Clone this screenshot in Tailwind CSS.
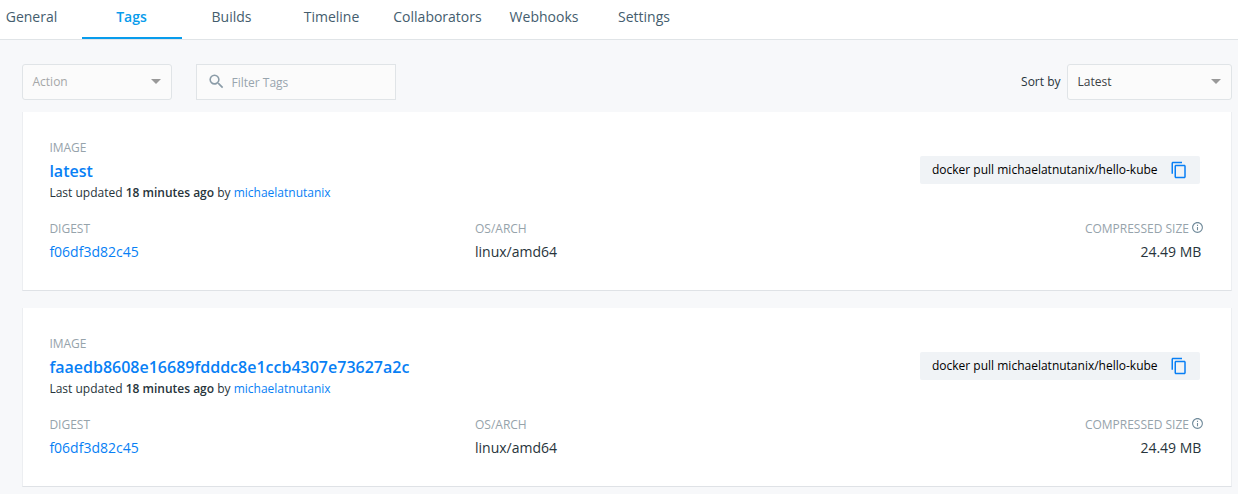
<!DOCTYPE html>
<html lang="en">
<head>
<meta charset="utf-8">
<title>Tags</title>
<script src="https://cdn.jsdelivr.net/npm/@tailwindcss/browser@4"></script>
</head>
<body class="h-[494px] overflow-hidden bg-[#f7f8fa] font-['Open_Sans',sans-serif] text-xs text-[#27343b]">
<svg class="hidden">
  <symbol id="copy" viewBox="0 0 24 24"><path fill="currentColor" d="M16 1H4c-1.100 0-2 .9-2 2v14h2V3h12V1zm3 4H8c-1.100 0-2 .9-2 2v14c0 1.100.9 2 2 2h11c1.100 0 2-.9 2-2V7c0-1.100-.9-2-2-2zm0 16H8V7h11v14z"/></symbol>
  <symbol id="info" viewBox="0 0 24 24"><path fill="currentColor" d="M11 17h2v-6h-2v6zm1-15C6.480 2 2 6.480 2 12s4.480 10 10 10 10-4.480 10-10S17.520 2 12 2zm0 18c-4.410 0-8-3.590-8-8s3.590-8 8-8 8 3.590 8 8-3.590 8-8 8zM11 9h2V7h-2v2z"/></symbol>
</svg>
<nav class="flex h-10 border-b border-[#e0e4e7] bg-white text-sm leading-[34px] text-[#445d6e]">
  <a class="-ml-[18px] w-[100px] pr-px text-center">General</a>
  <a class="h-[39px] w-[100px] border-b-2 border-[#089cec] pr-px text-center font-semibold text-[#089cec]">Tags</a>
  <a class="w-[100px] pr-px text-center">Builds</a>
  <a class="w-[100px] pr-px text-center">Timeline</a>
  <a class="w-[112px] pr-px text-center">Collaborators</a>
  <a class="w-[100px] text-center">Webhooks</a>
  <a class="w-[100px] text-center">Settings</a>
</nav>
<main class="pl-[22px] pr-1.5 pt-6">
  <div class="mb-3 flex h-9 items-center">
    <div class="flex h-9 w-[150px] items-center justify-between rounded-[3px] border border-[#e0e4e7] bg-[#fbfbfb] pl-[9.500px] pr-2.5 text-[#a5a7a8]"><span class="-mt-px">Action</span><svg class="-mt-0.5 h-[5px] w-2.5" viewBox="0 0 10 5"><path d="M0 0h10L5 5z" fill="#999"/></svg></div>
    <div class="ml-6 flex h-9 w-[200px] items-center border border-[#e0e4e7] bg-[#fbfbfb] pl-[9.500px] text-[#98a5ae]"><svg class="-mt-0.5 mr-1.5 size-[19px]" viewBox="0 0 24 24" fill="#8b9ca8"><path d="M15.500 14h-.79l-.28-.27A6.471 6.471 0 0 0 16 9.500 6.500 6.500 0 1 0 9.500 16c1.610 0 3.090-.59 4.230-1.570l.27.28v.79l5 4.990L20.490 19l-4.990-5zm-6 0C7.010 14 5 11.990 5 9.500S7.010 5 9.500 5 14 7.010 14 9.500 11.990 14 9.500 14z"/></svg><span class="mt-0.5">Filter Tags</span></div>
    <span class="ml-auto mr-[6.500px] -mt-px">Sort by</span>
    <div class="flex h-9 w-[165px] items-center justify-between rounded-[3px] border border-[#e0e4e7] bg-[#fbfbfb] pl-[9.500px] pr-2.5 text-[#3b4245]"><span class="-mt-px">Latest</span><svg class="-mt-0.5 h-[5px] w-2.5" viewBox="0 0 10 5"><path d="M0 0h10L5 5z" fill="#999"/></svg></div>
  </div>

  <section class="mb-[17px] h-[179px] border-x border-b border-x-[#eceef1] border-b-[#dfe2e6] bg-white pl-[26.400px] pr-[27px] pt-[27px]">
    <div class="flex h-[81px] justify-between">
      <div>
        <p class="leading-[18px] text-[#96a3ab]">IMAGE</p>
        <a class="block text-base leading-[28px] font-semibold text-[#087ff5]">latest</a>
        <p class="leading-4">Last updated <b class="font-semibold">18 minutes ago</b> by <a class="text-[#087ff5]">michaelatnutanix</a></p>
      </div>
      <div class="mr-1 mt-[17px] flex h-7 w-[280px] items-center rounded-[2px] bg-[#f0f3f6] pl-3 text-black"><span class="w-[238px] whitespace-nowrap">docker pull michaelatnutanix/hello-kube</span><svg class="size-[18px] text-[#087ff5]"><use href="#copy"/></svg></div>
    </div>
    <div class="flex">
      <div class="w-[425.600px]"><p class="leading-[18px] text-[#96a3ab]">DIGEST</p><a class="block text-sm leading-[28px] text-[#087ff5]">f06df3d82c45</a></div>
      <div><p class="leading-[18px] text-[#96a3ab]">OS/ARCH</p><p class="text-sm leading-[28px]">linux/amd64</p></div>
      <div class="ml-auto"><p class="flex leading-[18px] text-[#96a3ab]">COMPRESSED SIZE<svg class="ml-0.5 mt-px size-[13px] text-[#718b9b]"><use href="#info"/></svg></p><p class="pr-[2.600px] text-right text-sm leading-[28px]">24.49 MB</p></div>
    </div>
  </section>

  <section class="h-[179px] border-x border-b border-x-[#eceef1] border-b-[#dfe2e6] bg-white pl-[26.400px] pr-[27px] pt-[27px]">
    <div class="flex h-[81px] justify-between">
      <div>
        <p class="leading-[18px] text-[#96a3ab]">IMAGE</p>
        <a class="block text-base leading-[28px] font-semibold text-[#087ff5]">faaedb8608e16689fdddc8e1ccb4307e73627a2c</a>
        <p class="leading-4">Last updated <b class="font-semibold">18 minutes ago</b> by <a class="text-[#087ff5]">michaelatnutanix</a></p>
      </div>
      <div class="mr-1 mt-[17px] flex h-7 w-[280px] items-center rounded-[2px] bg-[#f0f3f6] pl-3 text-black"><span class="w-[238px] whitespace-nowrap">docker pull michaelatnutanix/hello-kube</span><svg class="size-[18px] text-[#087ff5]"><use href="#copy"/></svg></div>
    </div>
    <div class="flex">
      <div class="w-[425.600px]"><p class="leading-[18px] text-[#96a3ab]">DIGEST</p><a class="block text-sm leading-[28px] text-[#087ff5]">f06df3d82c45</a></div>
      <div><p class="leading-[18px] text-[#96a3ab]">OS/ARCH</p><p class="text-sm leading-[28px]">linux/amd64</p></div>
      <div class="ml-auto"><p class="flex leading-[18px] text-[#96a3ab]">COMPRESSED SIZE<svg class="ml-0.5 mt-px size-[13px] text-[#718b9b]"><use href="#info"/></svg></p><p class="pr-[2.600px] text-right text-sm leading-[28px]">24.49 MB</p></div>
    </div>
  </section>
</main>
</body>
</html>
